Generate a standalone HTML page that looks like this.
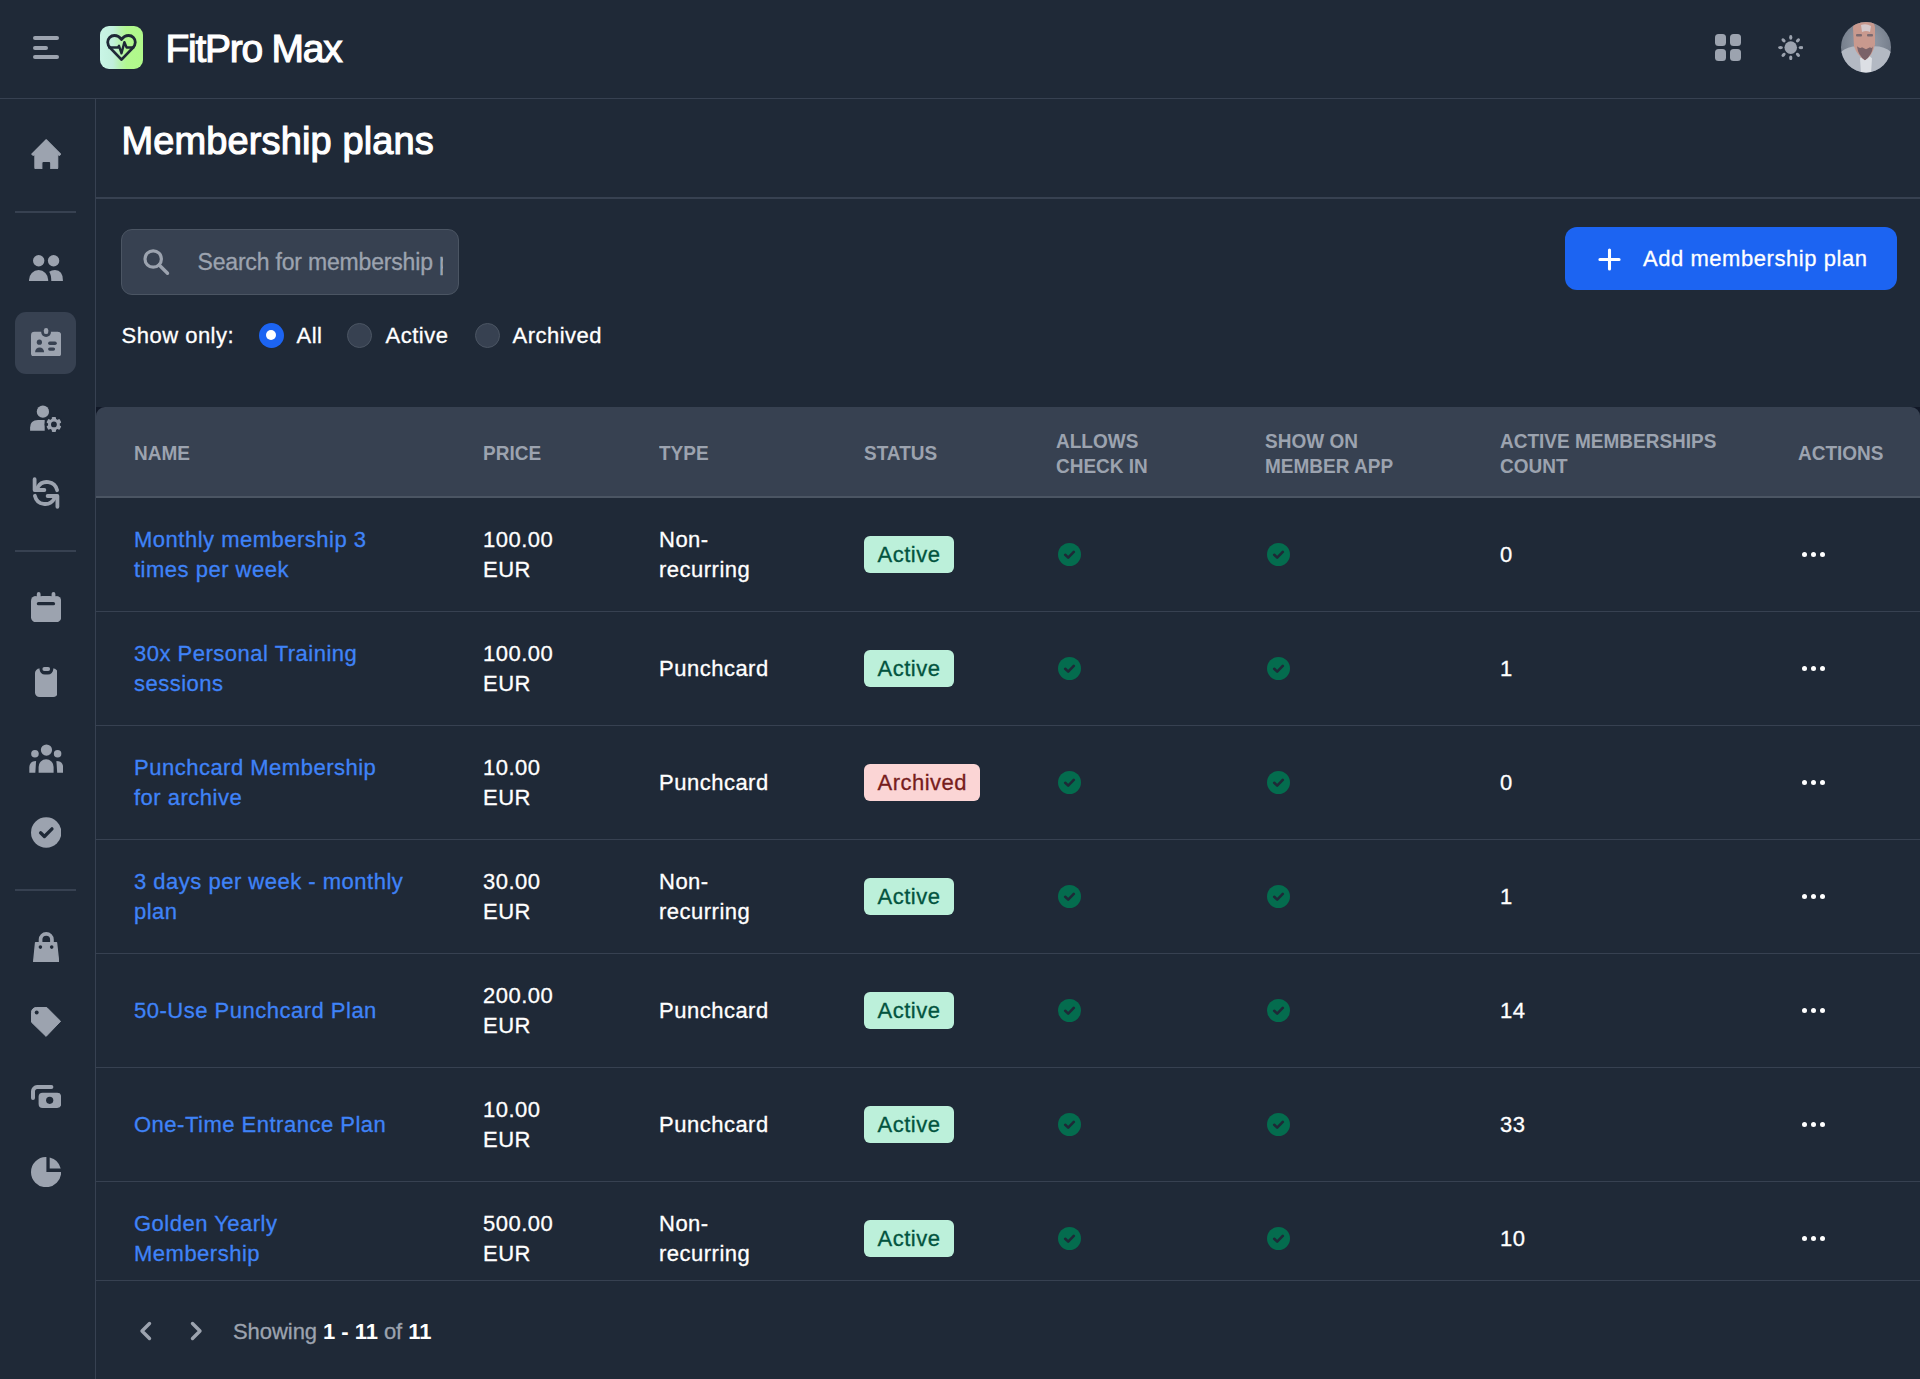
<!DOCTYPE html>
<html><head><meta charset="utf-8"><title>Membership plans</title>
<style>
html,body{margin:0;padding:0;}
body{width:1920px;height:1379px;position:relative;overflow:hidden;background:#1f2937;font-family:"Liberation Sans", sans-serif;}
.t{position:absolute;white-space:nowrap;-webkit-text-stroke:0.3px currentColor;}
.b{position:absolute;}
</style></head><body>
<div class="b" style="left:0px;top:98px;width:1920px;height:1px;background:#374151;"></div>
<div class="b" style="left:33px;top:36px;width:26px;height:4px;background:#9ca3af;border-radius:2px"></div>
<div class="b" style="left:33px;top:45.5px;width:15px;height:4px;background:#9ca3af;border-radius:2px"></div>
<div class="b" style="left:33px;top:55px;width:26px;height:4px;background:#9ca3af;border-radius:2px"></div>
<div class="b" style="left:100px;top:26px;width:43px;height:43px;border-radius:9px;background:linear-gradient(90deg,#c9f5e6 0%,#c2f0dd 30%,#b8f2b5 45%,#b2f88f 62%,#b0f98a 100%)"></div>
<svg class="b" style="left:105.5px;top:33.5px;" width="31" height="28" viewBox="0 0 31 28" preserveAspectRatio="none"><path d="M15.5 5.6 C13.8 2.9 11.2 1.5 8.3 1.5 C4.6 1.5 1.7 4.5 1.7 8.3 C1.7 10.6 2.8 12.6 4.4 14.1 L15.5 25.6 L26.6 14.1 C28.2 12.6 29.3 10.6 29.3 8.3 C29.3 4.5 26.4 1.5 22.7 1.5 C19.8 1.5 17.2 2.9 15.5 5.6 Z" fill="none" stroke="#1f2937" stroke-width="2.8" stroke-linejoin="round"/><path d="M3.2 13.5 H11.9 L13 11.8 L15.5 19.3 L18.4 8.1 L20.6 13.5 H27.5" fill="none" stroke="#1f2937" stroke-width="2.4" stroke-linejoin="round" stroke-linecap="round"/></svg>
<div class="t" style="left:165.5px;top:24.99px;font-size:39px;line-height:47px;font-weight:400;color:#fff;letter-spacing:-1.25px;-webkit-text-stroke:1.1px #fff">FitPro Max</div>
<div class="b" style="left:1714.5px;top:34px;width:11.7px;height:11.7px;background:#9ca3af;border-radius:3.5px"></div>
<div class="b" style="left:1729.8px;top:34px;width:11.7px;height:11.7px;background:#9ca3af;border-radius:3.5px"></div>
<div class="b" style="left:1714.5px;top:49.3px;width:11.7px;height:11.7px;background:#9ca3af;border-radius:3.5px"></div>
<div class="b" style="left:1729.8px;top:49.3px;width:11.7px;height:11.7px;background:#9ca3af;border-radius:3.5px"></div>
<svg class="b" style="left:1777.5px;top:35px;" width="25.5" height="25.2" viewBox="0 0 25.5 25.2" preserveAspectRatio="none"><circle cx="12.75" cy="12.6" r="6.3" fill="#9ca3af"/><ellipse cx="12.75" cy="2.40" rx="1.6" ry="2.4" transform="rotate(0 12.75 2.40)" fill="#9ca3af"/><ellipse cx="19.96" cy="5.39" rx="1.6" ry="2.4" transform="rotate(45 19.96 5.39)" fill="#9ca3af"/><ellipse cx="22.95" cy="12.60" rx="1.6" ry="2.4" transform="rotate(90 22.95 12.60)" fill="#9ca3af"/><ellipse cx="19.96" cy="19.81" rx="1.6" ry="2.4" transform="rotate(135 19.96 19.81)" fill="#9ca3af"/><ellipse cx="12.75" cy="22.80" rx="1.6" ry="2.4" transform="rotate(180 12.75 22.80)" fill="#9ca3af"/><ellipse cx="5.54" cy="19.81" rx="1.6" ry="2.4" transform="rotate(225 5.54 19.81)" fill="#9ca3af"/><ellipse cx="2.55" cy="12.60" rx="1.6" ry="2.4" transform="rotate(270 2.55 12.60)" fill="#9ca3af"/><ellipse cx="5.54" cy="5.39" rx="1.6" ry="2.4" transform="rotate(315 5.54 5.39)" fill="#9ca3af"/></svg>
<svg class="b" style="left:1840.8px;top:22.4px;" width="50" height="50.4" viewBox="0 0 50 50" preserveAspectRatio="none"><defs><clipPath id="av"><circle cx="25" cy="25" r="25"/></clipPath><radialGradient id="avbg" cx="0.5" cy="0.4" r="0.6"><stop offset="0" stop-color="#9aa2ae"/><stop offset="1" stop-color="#6f7886"/></radialGradient></defs><g clip-path="url(#av)"><rect width="50" height="50" fill="url(#avbg)"/><path d="M-2 52 L-2 32 Q4 24 17 24 L25 38 L33 24 Q46 24 52 32 L52 52 Z" fill="#b3b9c3"/><path d="M19 36 L25 31 L31 36 L30 52 L20 52 Z" fill="#dcdfe4"/><path d="M12 6 Q12 -2 23 -2 Q34 -2 34 6 L34 22 Q32 33 24 38 Q16 33 13 24 Z" fill="#c8998e"/><path d="M20 3 Q25 1 30 4 L29 10 Q25 8 21 10 Z" fill="#d5c9cc"/><path d="M16 24 Q19 27 21 25 L25 27 L29 25 Q31 27 32 24 Q31 33 24 38 Q17 33 16 24 Z" fill="#7a6268"/><rect x="15" y="12" width="6" height="2.5" rx="1" fill="#7a6a70"/><rect x="26" y="12" width="6" height="2.5" rx="1" fill="#7a6a70"/></g></svg>
<div class="b" style="left:95px;top:99px;width:1px;height:1280px;background:#374151;"></div>
<div class="b" style="left:15px;top:210.5px;width:61px;height:2px;background:#374151;"></div>
<div class="b" style="left:15px;top:549.5px;width:61px;height:2px;background:#374151;"></div>
<div class="b" style="left:15px;top:889px;width:61px;height:2px;background:#374151;"></div>
<div class="b" style="left:15px;top:312px;width:61px;height:62px;background:#374151;border-radius:11px"></div>
<svg class="b" style="left:30.7px;top:138.9px;" width="30.4" height="30.4" viewBox="0 0 30.4 30.4" preserveAspectRatio="none"><path fill="#9ca3af" stroke="#9ca3af" stroke-width="1.2" stroke-linejoin="round" d="M15.2 0.8 L29.6 15.1 L28.3 16.3 L26.7 14.8 V28.6 Q26.7 29.8 25.5 29.8 H19.8 V24 Q19.8 22.4 18.2 22.4 H12.4 Q10.8 22.4 10.8 24 V29.8 H5.1 Q3.9 29.8 3.9 28.6 V14.8 L2.2 16.3 L0.8 15.1 Z"/></svg>
<svg class="b" style="left:29px;top:254.7px;" width="34.2" height="26.8" viewBox="0 0 34.2 26.8" preserveAspectRatio="none"><circle cx="9.7" cy="5.8" r="5.7" fill="#9ca3af"/><circle cx="24.6" cy="5.8" r="5.7" fill="#9ca3af"/><path fill="#9ca3af" d="M0 26.3 V25 A9.6 10 0 0 1 19.2 25 V26.3 Z"/><path fill="#9ca3af" d="M20.2 16.8 Q22.5 15 26 15 Q33.9 15.5 33.9 25 V26.3 H22.3 Q22.3 20 20.2 16.8 Z"/></svg>
<svg class="b" style="left:30.9px;top:327.8px;" width="30.2" height="28.7" viewBox="0 0 30.2 28.7" preserveAspectRatio="none"><rect x="0" y="3.8" width="30.2" height="24.9" rx="3.5" fill="#9ca3af"/><circle cx="15.1" cy="4.1" r="4.9" fill="#374151"/><rect x="12.9" y="0" width="4.4" height="6.1" rx="2.2" fill="#9ca3af"/><circle cx="8.4" cy="14.2" r="2.6" fill="#374151"/><path fill="#374151" d="M4.1 24.2 A4.5 4.8 0 0 1 13.1 24.2 Z"/><rect x="17.1" y="13.5" width="8.7" height="3.5" rx="1.75" fill="#374151"/><rect x="17.1" y="19.4" width="7" height="3.4" rx="1.7" fill="#374151"/></svg>
<svg class="b" style="left:30px;top:405px;" width="32" height="27.5" viewBox="0 0 32 27.5" preserveAspectRatio="none"><circle cx="12.9" cy="6.7" r="6.15" fill="#9ca3af"/><path fill="#9ca3af" d="M0.1 25.7 V22.5 Q0.1 15 8 15 H14.7 V25.7 Z"/><circle cx="23.9" cy="19.4" r="9.3" fill="#1f2937"/><rect x="21.8" y="11.9" width="4.2" height="5" rx="0.9" fill="#9ca3af" transform="rotate(0 23.9 19.4)"/><rect x="21.8" y="11.9" width="4.2" height="5" rx="0.9" fill="#9ca3af" transform="rotate(60 23.9 19.4)"/><rect x="21.8" y="11.9" width="4.2" height="5" rx="0.9" fill="#9ca3af" transform="rotate(120 23.9 19.4)"/><rect x="21.8" y="11.9" width="4.2" height="5" rx="0.9" fill="#9ca3af" transform="rotate(180 23.9 19.4)"/><rect x="21.8" y="11.9" width="4.2" height="5" rx="0.9" fill="#9ca3af" transform="rotate(240 23.9 19.4)"/><rect x="21.8" y="11.9" width="4.2" height="5" rx="0.9" fill="#9ca3af" transform="rotate(300 23.9 19.4)"/><circle cx="23.9" cy="19.4" r="5.9" fill="#9ca3af"/><circle cx="23.9" cy="19.4" r="2.9" fill="#1f2937"/></svg>
<svg class="b" style="left:30px;top:477px;" width="32" height="32" viewBox="-16 -16 32 32" preserveAspectRatio="none"><g fill="none" stroke="#9ca3af" stroke-width="3.8" stroke-linecap="round" stroke-linejoin="round"><path d="M-11.4 -13.8 V-3 H-1.6"/><path d="M-8.3 -5.6 A10.5 10.5 0 0 1 11.1 -2.8"/><path d="M11.4 13.8 V3 H1.6"/><path d="M8.3 5.6 A10.5 10.5 0 0 1 -11.1 2.8"/></g></svg>
<svg class="b" style="left:30.9px;top:592.1px;" width="30.2" height="30.4" viewBox="0 0 30.2 30.4" preserveAspectRatio="none"><rect x="0" y="3.9" width="30.2" height="26.4" rx="5" fill="#9ca3af"/><rect x="4.8" y="-1" width="5.8" height="5.2" fill="#1f2937"/><rect x="19.6" y="-1" width="5.8" height="5.2" fill="#1f2937"/><rect x="5.8" y="0" width="3.8" height="7" rx="1.9" fill="#9ca3af"/><rect x="20.6" y="0" width="3.8" height="7" rx="1.9" fill="#9ca3af"/><rect x="5.8" y="10" width="18.3" height="3.3" rx="1.65" fill="#1f2937"/></svg>
<svg class="b" style="left:34.7px;top:667.4px;" width="22.8" height="30" viewBox="0 0 22.8 30" preserveAspectRatio="none"><rect x="0" y="1.6" width="22.8" height="28.4" rx="4.5" fill="#9ca3af"/><rect x="4.6" y="-3" width="13.6" height="10.4" rx="5.2" fill="#1f2937"/><rect x="7.4" y="0" width="7.7" height="3.9" rx="1.95" fill="#9ca3af"/></svg>
<svg class="b" style="left:28.8px;top:744px;" width="34.5" height="28.8" viewBox="0 0 34.5 28.8" preserveAspectRatio="none"><circle cx="17.45" cy="6.05" r="5.6" fill="#9ca3af"/><circle cx="5.95" cy="9.8" r="3.8" fill="#9ca3af"/><circle cx="28.6" cy="9.8" r="3.75" fill="#9ca3af"/><path fill="#9ca3af" d="M9.6 28.7 V22.9 A7.5 7.7 0 0 1 24.6 22.9 V28.7 Z"/><path fill="#9ca3af" d="M0.3 28.7 V23.5 Q0.3 17.3 7.1 17 L6.3 28.7 Z"/><path fill="#9ca3af" d="M34.2 28.7 V23.5 Q34.2 17.3 27.4 17 L28.2 28.7 Z"/></svg>
<svg class="b" style="left:30.9px;top:817px;" width="30.4" height="31" viewBox="0 0 30.4 31" preserveAspectRatio="none"><circle cx="15.2" cy="15.5" r="15.2" fill="#9ca3af"/><path d="M9.6 15.8 L13.4 19.5 L21 11.8" fill="none" stroke="#1f2937" stroke-width="3.3" stroke-linecap="round" stroke-linejoin="round"/></svg>
<svg class="b" style="left:32.8px;top:931.5px;" width="26.3" height="30.2" viewBox="0 0 26.3 30.2" preserveAspectRatio="none"><path d="M7.55 10.5 V7.55 A5.7 5.7 0 0 1 18.95 7.55 V10.5" fill="none" stroke="#9ca3af" stroke-width="3.7"/><path fill="#9ca3af" stroke="#9ca3af" stroke-width="1.4" stroke-linejoin="round" d="M2.6 10.6 H23.5 L25.6 29.5 H0.7 Z"/><circle cx="7.4" cy="15.1" r="1.8" fill="#1f2937"/><circle cx="18.7" cy="15.1" r="1.8" fill="#1f2937"/></svg>
<svg class="b" style="left:30.9px;top:1006.9px;" width="30.4" height="30.2" viewBox="0 0 30.4 30.2" preserveAspectRatio="none"><path fill="#9ca3af" stroke="#9ca3af" stroke-width="1" stroke-linejoin="round" d="M0.5 5.2 A4.7 4.7 0 0 1 5.2 0.5 H15.8 L29.6 14.3 L15.1 29.4 L0.5 15.2 Z"/><circle cx="5.7" cy="5.5" r="1.95" fill="#1f2937"/></svg>
<svg class="b" style="left:30.9px;top:1085.3px;" width="30.2" height="22.9" viewBox="0 0 30.2 22.9" preserveAspectRatio="none"><path d="M2 12.9 V6.2 A4.1 4.1 0 0 1 6.1 2.1 H20.4" fill="none" stroke="#9ca3af" stroke-width="4" stroke-linecap="round" stroke-linejoin="round"/><rect x="7.6" y="7.7" width="22.6" height="15.2" rx="4" fill="#9ca3af"/><circle cx="18.7" cy="15.3" r="3.6" fill="#1f2937"/></svg>
<svg class="b" style="left:30.9px;top:1156.6px;" width="30.2" height="30.2" viewBox="0 0 30.2 30.2" preserveAspectRatio="none"><path fill="#9ca3af" d="M15.4 0 V15.1 H30.2 A15.1 15.1 0 1 1 15.4 0 Z"/><path fill="#9ca3af" d="M18.7 0.44 V11.4 H29.74 A15.1 15.1 0 0 0 18.7 0.44 Z"/></svg>
<div class="t" style="left:121.5px;top:117.83px;font-size:38px;line-height:46px;font-weight:400;color:#fff;letter-spacing:0.12px;-webkit-text-stroke:1.1px #fff">Membership plans</div>
<div class="b" style="left:96px;top:197px;width:1824px;height:1.5px;background:#374151;"></div>
<div class="b" style="left:121px;top:229px;width:337.5px;height:65.5px;box-sizing:border-box;border:1.5px solid #4b5563;border-radius:11px;background:#374151;overflow:hidden"></div>
<svg class="b" style="left:141.5px;top:248px;" width="28" height="28" viewBox="0 0 28 28" preserveAspectRatio="none"><circle cx="11.2" cy="11" r="8.2" fill="none" stroke="#9ca3af" stroke-width="3.2"/><path d="M17.2 17 L25.5 25.3" stroke="#9ca3af" stroke-width="3.4" stroke-linecap="round"/></svg>
<div class="b" style="left:196px;top:240px;width:247px;height:45px;overflow:hidden"><div class="t" style="left:1.5px;top:-0.47px;font-size:23px;line-height:45px;color:#9ca3af;letter-spacing:-0.18px">Search for membership p</div></div>
<div class="t" style="left:121.5px;top:323.38px;font-size:22px;line-height:26px;font-weight:400;color:#fff;letter-spacing:0.5px;">Show only:</div>
<div class="b" style="left:258.8px;top:322.7px;width:25px;height:25px;background:#1c64f2;border-radius:50%"></div>
<div class="b" style="left:266.3px;top:330.2px;width:10px;height:10px;background:#fff;border-radius:50%"></div>
<div class="t" style="left:296.5px;top:323.38px;font-size:22px;line-height:26px;font-weight:400;color:#fff;letter-spacing:0.5px;">All</div>
<div class="b" style="left:346.8px;top:322.7px;width:25px;height:25px;background:#374151;border-radius:50%;box-sizing:border-box;border:1.5px solid #4b5563"></div>
<div class="t" style="left:385.5px;top:323.38px;font-size:22px;line-height:26px;font-weight:400;color:#fff;letter-spacing:0.5px;">Active</div>
<div class="b" style="left:474.6px;top:322.7px;width:25px;height:25px;background:#374151;border-radius:50%;box-sizing:border-box;border:1.5px solid #4b5563"></div>
<div class="t" style="left:512.5px;top:323.38px;font-size:22px;line-height:26px;font-weight:400;color:#fff;letter-spacing:0.5px;">Archived</div>
<div class="b" style="left:1565px;top:227px;width:332px;height:63px;background:#1c64f2;border-radius:12px"></div>
<svg class="b" style="left:1597.5px;top:247.5px;" width="23" height="23" viewBox="0 0 24 24" preserveAspectRatio="none"><path d="M12 2 V22 M2 12 H22" stroke="#fff" stroke-width="3.2" stroke-linecap="round"/></svg>
<div class="t" style="left:1643px;top:245.88px;font-size:22px;line-height:26px;font-weight:400;color:#fff;letter-spacing:0.55px;">Add membership plan</div>
<div class="b" style="left:96px;top:407px;width:1824px;height:873px;background:#111827;"></div>
<div class="b" style="left:96px;top:407px;width:1824px;height:89px;background:#374151;border-radius:9px 9px 0 0"></div>
<div class="b" style="left:96px;top:496px;width:1824px;height:2px;background:#4b5563;"></div>
<div class="b" style="left:96px;top:498px;width:1824px;height:782px;background:#1f2937;"></div>
<div class="t" style="left:134px;top:441.92px;font-size:19px;line-height:23px;font-weight:700;color:#9ca3af;letter-spacing:0px;-webkit-text-stroke:0;transform:scaleY(1.1);transform-origin:0 18.08px">NAME</div>
<div class="t" style="left:483px;top:441.92px;font-size:19px;line-height:23px;font-weight:700;color:#9ca3af;letter-spacing:0px;-webkit-text-stroke:0;transform:scaleY(1.1);transform-origin:0 18.08px">PRICE</div>
<div class="t" style="left:659px;top:441.92px;font-size:19px;line-height:23px;font-weight:700;color:#9ca3af;letter-spacing:0px;-webkit-text-stroke:0;transform:scaleY(1.1);transform-origin:0 18.08px">TYPE</div>
<div class="t" style="left:864px;top:441.92px;font-size:19px;line-height:23px;font-weight:700;color:#9ca3af;letter-spacing:0px;-webkit-text-stroke:0;transform:scaleY(1.1);transform-origin:0 18.08px">STATUS</div>
<div class="t" style="left:1056px;top:429.92px;font-size:19px;line-height:23px;font-weight:700;color:#9ca3af;letter-spacing:0px;-webkit-text-stroke:0;transform:scaleY(1.1);transform-origin:0 18.08px">ALLOWS</div>
<div class="t" style="left:1056px;top:454.92px;font-size:19px;line-height:23px;font-weight:700;color:#9ca3af;letter-spacing:0px;-webkit-text-stroke:0;transform:scaleY(1.1);transform-origin:0 18.08px">CHECK IN</div>
<div class="t" style="left:1265px;top:429.92px;font-size:19px;line-height:23px;font-weight:700;color:#9ca3af;letter-spacing:0px;-webkit-text-stroke:0;transform:scaleY(1.1);transform-origin:0 18.08px">SHOW ON</div>
<div class="t" style="left:1265px;top:454.92px;font-size:19px;line-height:23px;font-weight:700;color:#9ca3af;letter-spacing:0px;-webkit-text-stroke:0;transform:scaleY(1.1);transform-origin:0 18.08px">MEMBER APP</div>
<div class="t" style="left:1500px;top:429.92px;font-size:19px;line-height:23px;font-weight:700;color:#9ca3af;letter-spacing:0px;-webkit-text-stroke:0;transform:scaleY(1.1);transform-origin:0 18.08px">ACTIVE MEMBERSHIPS</div>
<div class="t" style="left:1500px;top:454.92px;font-size:19px;line-height:23px;font-weight:700;color:#9ca3af;letter-spacing:0px;-webkit-text-stroke:0;transform:scaleY(1.1);transform-origin:0 18.08px">COUNT</div>
<div class="t" style="left:1798px;top:441.92px;font-size:19px;line-height:23px;font-weight:700;color:#9ca3af;letter-spacing:0px;-webkit-text-stroke:0;transform:scaleY(1.1);transform-origin:0 18.08px">ACTIONS</div>
<div class="t" style="left:134px;top:526.58px;font-size:22px;line-height:26px;font-weight:400;color:#3f83f8;letter-spacing:0.5px;">Monthly membership 3</div>
<div class="t" style="left:134px;top:557.38px;font-size:22px;line-height:26px;font-weight:400;color:#3f83f8;letter-spacing:0.5px;">times per week</div>
<div class="t" style="left:483px;top:526.58px;font-size:22px;line-height:26px;font-weight:400;color:#fff;letter-spacing:0.5px;">100.00</div>
<div class="t" style="left:483px;top:557.38px;font-size:22px;line-height:26px;font-weight:400;color:#fff;letter-spacing:0.5px;">EUR</div>
<div class="t" style="left:659px;top:526.58px;font-size:22px;line-height:26px;font-weight:400;color:#fff;letter-spacing:0.5px;">Non-</div>
<div class="t" style="left:659px;top:557.38px;font-size:22px;line-height:26px;font-weight:400;color:#fff;letter-spacing:0.5px;">recurring</div>
<div class="b" style="left:864px;top:535.5px;width:89.5px;height:37px;background:#bcf0da;border-radius:6px"></div>
<div class="t" style="left:877.5px;top:541.88px;font-size:22px;line-height:26px;font-weight:400;color:#03543f;letter-spacing:0.5px;">Active</div>
<svg class="b" style="left:1057.5px;top:542.5px;" width="23" height="23" viewBox="0 0 23 23" preserveAspectRatio="none"><circle cx="11.5" cy="11.5" r="11.5" fill="#046c4e"/><path d="M7.2 11.8 L10.2 14.6 L15.8 8.9" fill="none" stroke="#1f2937" stroke-width="2.6" stroke-linecap="round" stroke-linejoin="round"/></svg>
<svg class="b" style="left:1267.0px;top:542.5px;" width="23" height="23" viewBox="0 0 23 23" preserveAspectRatio="none"><circle cx="11.5" cy="11.5" r="11.5" fill="#046c4e"/><path d="M7.2 11.8 L10.2 14.6 L15.8 8.9" fill="none" stroke="#1f2937" stroke-width="2.6" stroke-linecap="round" stroke-linejoin="round"/></svg>
<div class="t" style="left:1500px;top:542.08px;font-size:22px;line-height:26px;font-weight:400;color:#fff;letter-spacing:0.5px;">0</div>
<div class="b" style="left:1801.9px;top:552.0px;width:5px;height:5px;background:#fff;border-radius:50%"></div>
<div class="b" style="left:1810.7px;top:552.0px;width:5px;height:5px;background:#fff;border-radius:50%"></div>
<div class="b" style="left:1819.5px;top:552.0px;width:5px;height:5px;background:#fff;border-radius:50%"></div>
<div class="b" style="left:96px;top:610.5px;width:1824px;height:1.5px;background:#374151;"></div>
<div class="t" style="left:134px;top:640.58px;font-size:22px;line-height:26px;font-weight:400;color:#3f83f8;letter-spacing:0.5px;">30x Personal Training</div>
<div class="t" style="left:134px;top:671.38px;font-size:22px;line-height:26px;font-weight:400;color:#3f83f8;letter-spacing:0.5px;">sessions</div>
<div class="t" style="left:483px;top:640.58px;font-size:22px;line-height:26px;font-weight:400;color:#fff;letter-spacing:0.5px;">100.00</div>
<div class="t" style="left:483px;top:671.38px;font-size:22px;line-height:26px;font-weight:400;color:#fff;letter-spacing:0.5px;">EUR</div>
<div class="t" style="left:659px;top:656.08px;font-size:22px;line-height:26px;font-weight:400;color:#fff;letter-spacing:0.5px;">Punchcard</div>
<div class="b" style="left:864px;top:649.5px;width:89.5px;height:37px;background:#bcf0da;border-radius:6px"></div>
<div class="t" style="left:877.5px;top:655.88px;font-size:22px;line-height:26px;font-weight:400;color:#03543f;letter-spacing:0.5px;">Active</div>
<svg class="b" style="left:1057.5px;top:656.5px;" width="23" height="23" viewBox="0 0 23 23" preserveAspectRatio="none"><circle cx="11.5" cy="11.5" r="11.5" fill="#046c4e"/><path d="M7.2 11.8 L10.2 14.6 L15.8 8.9" fill="none" stroke="#1f2937" stroke-width="2.6" stroke-linecap="round" stroke-linejoin="round"/></svg>
<svg class="b" style="left:1267.0px;top:656.5px;" width="23" height="23" viewBox="0 0 23 23" preserveAspectRatio="none"><circle cx="11.5" cy="11.5" r="11.5" fill="#046c4e"/><path d="M7.2 11.8 L10.2 14.6 L15.8 8.9" fill="none" stroke="#1f2937" stroke-width="2.6" stroke-linecap="round" stroke-linejoin="round"/></svg>
<div class="t" style="left:1500px;top:656.08px;font-size:22px;line-height:26px;font-weight:400;color:#fff;letter-spacing:0.5px;">1</div>
<div class="b" style="left:1801.9px;top:666.0px;width:5px;height:5px;background:#fff;border-radius:50%"></div>
<div class="b" style="left:1810.7px;top:666.0px;width:5px;height:5px;background:#fff;border-radius:50%"></div>
<div class="b" style="left:1819.5px;top:666.0px;width:5px;height:5px;background:#fff;border-radius:50%"></div>
<div class="b" style="left:96px;top:724.5px;width:1824px;height:1.5px;background:#374151;"></div>
<div class="t" style="left:134px;top:754.58px;font-size:22px;line-height:26px;font-weight:400;color:#3f83f8;letter-spacing:0.5px;">Punchcard Membership</div>
<div class="t" style="left:134px;top:785.38px;font-size:22px;line-height:26px;font-weight:400;color:#3f83f8;letter-spacing:0.5px;">for archive</div>
<div class="t" style="left:483px;top:754.58px;font-size:22px;line-height:26px;font-weight:400;color:#fff;letter-spacing:0.5px;">10.00</div>
<div class="t" style="left:483px;top:785.38px;font-size:22px;line-height:26px;font-weight:400;color:#fff;letter-spacing:0.5px;">EUR</div>
<div class="t" style="left:659px;top:770.08px;font-size:22px;line-height:26px;font-weight:400;color:#fff;letter-spacing:0.5px;">Punchcard</div>
<div class="b" style="left:864px;top:763.5px;width:116px;height:37px;background:#fbd5d5;border-radius:6px"></div>
<div class="t" style="left:877.5px;top:769.88px;font-size:22px;line-height:26px;font-weight:400;color:#771d1d;letter-spacing:0.5px;">Archived</div>
<svg class="b" style="left:1057.5px;top:770.5px;" width="23" height="23" viewBox="0 0 23 23" preserveAspectRatio="none"><circle cx="11.5" cy="11.5" r="11.5" fill="#046c4e"/><path d="M7.2 11.8 L10.2 14.6 L15.8 8.9" fill="none" stroke="#1f2937" stroke-width="2.6" stroke-linecap="round" stroke-linejoin="round"/></svg>
<svg class="b" style="left:1267.0px;top:770.5px;" width="23" height="23" viewBox="0 0 23 23" preserveAspectRatio="none"><circle cx="11.5" cy="11.5" r="11.5" fill="#046c4e"/><path d="M7.2 11.8 L10.2 14.6 L15.8 8.9" fill="none" stroke="#1f2937" stroke-width="2.6" stroke-linecap="round" stroke-linejoin="round"/></svg>
<div class="t" style="left:1500px;top:770.08px;font-size:22px;line-height:26px;font-weight:400;color:#fff;letter-spacing:0.5px;">0</div>
<div class="b" style="left:1801.9px;top:780.0px;width:5px;height:5px;background:#fff;border-radius:50%"></div>
<div class="b" style="left:1810.7px;top:780.0px;width:5px;height:5px;background:#fff;border-radius:50%"></div>
<div class="b" style="left:1819.5px;top:780.0px;width:5px;height:5px;background:#fff;border-radius:50%"></div>
<div class="b" style="left:96px;top:838.5px;width:1824px;height:1.5px;background:#374151;"></div>
<div class="t" style="left:134px;top:868.58px;font-size:22px;line-height:26px;font-weight:400;color:#3f83f8;letter-spacing:0.5px;">3 days per week - monthly</div>
<div class="t" style="left:134px;top:899.38px;font-size:22px;line-height:26px;font-weight:400;color:#3f83f8;letter-spacing:0.5px;">plan</div>
<div class="t" style="left:483px;top:868.58px;font-size:22px;line-height:26px;font-weight:400;color:#fff;letter-spacing:0.5px;">30.00</div>
<div class="t" style="left:483px;top:899.38px;font-size:22px;line-height:26px;font-weight:400;color:#fff;letter-spacing:0.5px;">EUR</div>
<div class="t" style="left:659px;top:868.58px;font-size:22px;line-height:26px;font-weight:400;color:#fff;letter-spacing:0.5px;">Non-</div>
<div class="t" style="left:659px;top:899.38px;font-size:22px;line-height:26px;font-weight:400;color:#fff;letter-spacing:0.5px;">recurring</div>
<div class="b" style="left:864px;top:877.5px;width:89.5px;height:37px;background:#bcf0da;border-radius:6px"></div>
<div class="t" style="left:877.5px;top:883.88px;font-size:22px;line-height:26px;font-weight:400;color:#03543f;letter-spacing:0.5px;">Active</div>
<svg class="b" style="left:1057.5px;top:884.5px;" width="23" height="23" viewBox="0 0 23 23" preserveAspectRatio="none"><circle cx="11.5" cy="11.5" r="11.5" fill="#046c4e"/><path d="M7.2 11.8 L10.2 14.6 L15.8 8.9" fill="none" stroke="#1f2937" stroke-width="2.6" stroke-linecap="round" stroke-linejoin="round"/></svg>
<svg class="b" style="left:1267.0px;top:884.5px;" width="23" height="23" viewBox="0 0 23 23" preserveAspectRatio="none"><circle cx="11.5" cy="11.5" r="11.5" fill="#046c4e"/><path d="M7.2 11.8 L10.2 14.6 L15.8 8.9" fill="none" stroke="#1f2937" stroke-width="2.6" stroke-linecap="round" stroke-linejoin="round"/></svg>
<div class="t" style="left:1500px;top:884.08px;font-size:22px;line-height:26px;font-weight:400;color:#fff;letter-spacing:0.5px;">1</div>
<div class="b" style="left:1801.9px;top:894.0px;width:5px;height:5px;background:#fff;border-radius:50%"></div>
<div class="b" style="left:1810.7px;top:894.0px;width:5px;height:5px;background:#fff;border-radius:50%"></div>
<div class="b" style="left:1819.5px;top:894.0px;width:5px;height:5px;background:#fff;border-radius:50%"></div>
<div class="b" style="left:96px;top:952.5px;width:1824px;height:1.5px;background:#374151;"></div>
<div class="t" style="left:134px;top:998.08px;font-size:22px;line-height:26px;font-weight:400;color:#3f83f8;letter-spacing:0.5px;">50-Use Punchcard Plan</div>
<div class="t" style="left:483px;top:982.58px;font-size:22px;line-height:26px;font-weight:400;color:#fff;letter-spacing:0.5px;">200.00</div>
<div class="t" style="left:483px;top:1013.38px;font-size:22px;line-height:26px;font-weight:400;color:#fff;letter-spacing:0.5px;">EUR</div>
<div class="t" style="left:659px;top:998.08px;font-size:22px;line-height:26px;font-weight:400;color:#fff;letter-spacing:0.5px;">Punchcard</div>
<div class="b" style="left:864px;top:991.5px;width:89.5px;height:37px;background:#bcf0da;border-radius:6px"></div>
<div class="t" style="left:877.5px;top:997.88px;font-size:22px;line-height:26px;font-weight:400;color:#03543f;letter-spacing:0.5px;">Active</div>
<svg class="b" style="left:1057.5px;top:998.5px;" width="23" height="23" viewBox="0 0 23 23" preserveAspectRatio="none"><circle cx="11.5" cy="11.5" r="11.5" fill="#046c4e"/><path d="M7.2 11.8 L10.2 14.6 L15.8 8.9" fill="none" stroke="#1f2937" stroke-width="2.6" stroke-linecap="round" stroke-linejoin="round"/></svg>
<svg class="b" style="left:1267.0px;top:998.5px;" width="23" height="23" viewBox="0 0 23 23" preserveAspectRatio="none"><circle cx="11.5" cy="11.5" r="11.5" fill="#046c4e"/><path d="M7.2 11.8 L10.2 14.6 L15.8 8.9" fill="none" stroke="#1f2937" stroke-width="2.6" stroke-linecap="round" stroke-linejoin="round"/></svg>
<div class="t" style="left:1500px;top:998.08px;font-size:22px;line-height:26px;font-weight:400;color:#fff;letter-spacing:0.5px;">14</div>
<div class="b" style="left:1801.9px;top:1008.0px;width:5px;height:5px;background:#fff;border-radius:50%"></div>
<div class="b" style="left:1810.7px;top:1008.0px;width:5px;height:5px;background:#fff;border-radius:50%"></div>
<div class="b" style="left:1819.5px;top:1008.0px;width:5px;height:5px;background:#fff;border-radius:50%"></div>
<div class="b" style="left:96px;top:1066.5px;width:1824px;height:1.5px;background:#374151;"></div>
<div class="t" style="left:134px;top:1112.08px;font-size:22px;line-height:26px;font-weight:400;color:#3f83f8;letter-spacing:0.5px;">One-Time Entrance Plan</div>
<div class="t" style="left:483px;top:1096.58px;font-size:22px;line-height:26px;font-weight:400;color:#fff;letter-spacing:0.5px;">10.00</div>
<div class="t" style="left:483px;top:1127.38px;font-size:22px;line-height:26px;font-weight:400;color:#fff;letter-spacing:0.5px;">EUR</div>
<div class="t" style="left:659px;top:1112.08px;font-size:22px;line-height:26px;font-weight:400;color:#fff;letter-spacing:0.5px;">Punchcard</div>
<div class="b" style="left:864px;top:1105.5px;width:89.5px;height:37px;background:#bcf0da;border-radius:6px"></div>
<div class="t" style="left:877.5px;top:1111.88px;font-size:22px;line-height:26px;font-weight:400;color:#03543f;letter-spacing:0.5px;">Active</div>
<svg class="b" style="left:1057.5px;top:1112.5px;" width="23" height="23" viewBox="0 0 23 23" preserveAspectRatio="none"><circle cx="11.5" cy="11.5" r="11.5" fill="#046c4e"/><path d="M7.2 11.8 L10.2 14.6 L15.8 8.9" fill="none" stroke="#1f2937" stroke-width="2.6" stroke-linecap="round" stroke-linejoin="round"/></svg>
<svg class="b" style="left:1267.0px;top:1112.5px;" width="23" height="23" viewBox="0 0 23 23" preserveAspectRatio="none"><circle cx="11.5" cy="11.5" r="11.5" fill="#046c4e"/><path d="M7.2 11.8 L10.2 14.6 L15.8 8.9" fill="none" stroke="#1f2937" stroke-width="2.6" stroke-linecap="round" stroke-linejoin="round"/></svg>
<div class="t" style="left:1500px;top:1112.08px;font-size:22px;line-height:26px;font-weight:400;color:#fff;letter-spacing:0.5px;">33</div>
<div class="b" style="left:1801.9px;top:1122.0px;width:5px;height:5px;background:#fff;border-radius:50%"></div>
<div class="b" style="left:1810.7px;top:1122.0px;width:5px;height:5px;background:#fff;border-radius:50%"></div>
<div class="b" style="left:1819.5px;top:1122.0px;width:5px;height:5px;background:#fff;border-radius:50%"></div>
<div class="b" style="left:96px;top:1180.5px;width:1824px;height:1.5px;background:#374151;"></div>
<div class="t" style="left:134px;top:1210.58px;font-size:22px;line-height:26px;font-weight:400;color:#3f83f8;letter-spacing:0.5px;">Golden Yearly</div>
<div class="t" style="left:134px;top:1241.38px;font-size:22px;line-height:26px;font-weight:400;color:#3f83f8;letter-spacing:0.5px;">Membership</div>
<div class="t" style="left:483px;top:1210.58px;font-size:22px;line-height:26px;font-weight:400;color:#fff;letter-spacing:0.5px;">500.00</div>
<div class="t" style="left:483px;top:1241.38px;font-size:22px;line-height:26px;font-weight:400;color:#fff;letter-spacing:0.5px;">EUR</div>
<div class="t" style="left:659px;top:1210.58px;font-size:22px;line-height:26px;font-weight:400;color:#fff;letter-spacing:0.5px;">Non-</div>
<div class="t" style="left:659px;top:1241.38px;font-size:22px;line-height:26px;font-weight:400;color:#fff;letter-spacing:0.5px;">recurring</div>
<div class="b" style="left:864px;top:1219.5px;width:89.5px;height:37px;background:#bcf0da;border-radius:6px"></div>
<div class="t" style="left:877.5px;top:1225.88px;font-size:22px;line-height:26px;font-weight:400;color:#03543f;letter-spacing:0.5px;">Active</div>
<svg class="b" style="left:1057.5px;top:1226.5px;" width="23" height="23" viewBox="0 0 23 23" preserveAspectRatio="none"><circle cx="11.5" cy="11.5" r="11.5" fill="#046c4e"/><path d="M7.2 11.8 L10.2 14.6 L15.8 8.9" fill="none" stroke="#1f2937" stroke-width="2.6" stroke-linecap="round" stroke-linejoin="round"/></svg>
<svg class="b" style="left:1267.0px;top:1226.5px;" width="23" height="23" viewBox="0 0 23 23" preserveAspectRatio="none"><circle cx="11.5" cy="11.5" r="11.5" fill="#046c4e"/><path d="M7.2 11.8 L10.2 14.6 L15.8 8.9" fill="none" stroke="#1f2937" stroke-width="2.6" stroke-linecap="round" stroke-linejoin="round"/></svg>
<div class="t" style="left:1500px;top:1226.08px;font-size:22px;line-height:26px;font-weight:400;color:#fff;letter-spacing:0.5px;">10</div>
<div class="b" style="left:1801.9px;top:1236.0px;width:5px;height:5px;background:#fff;border-radius:50%"></div>
<div class="b" style="left:1810.7px;top:1236.0px;width:5px;height:5px;background:#fff;border-radius:50%"></div>
<div class="b" style="left:1819.5px;top:1236.0px;width:5px;height:5px;background:#fff;border-radius:50%"></div>
<div class="b" style="left:96px;top:1279.5px;width:1824px;height:1.5px;background:#374151;"></div>
<div class="b" style="left:96px;top:1281px;width:1824px;height:98px;background:#1f2937;"></div>
<svg class="b" style="left:138px;top:1321px;" width="16" height="20" viewBox="0 0 16 20" preserveAspectRatio="none"><path d="M11.5 2.5 L4 10 L11.5 17.5" fill="none" stroke="#9ca3af" stroke-width="3.4" stroke-linecap="round" stroke-linejoin="round"/></svg>
<svg class="b" style="left:188px;top:1321px;" width="16" height="20" viewBox="0 0 16 20" preserveAspectRatio="none"><path d="M4.5 2.5 L12 10 L4.5 17.5" fill="none" stroke="#9ca3af" stroke-width="3.4" stroke-linecap="round" stroke-linejoin="round"/></svg>
<div class="t" style="left:233px;top:1318.88px;font-size:22px;line-height:26px;font-weight:400;color:#9ca3af;letter-spacing:-0.05px;">Showing <b style="color:#fff;-webkit-text-stroke:0">1 - 11</b> of <b style="color:#fff;-webkit-text-stroke:0">11</b></div>
</body></html>
